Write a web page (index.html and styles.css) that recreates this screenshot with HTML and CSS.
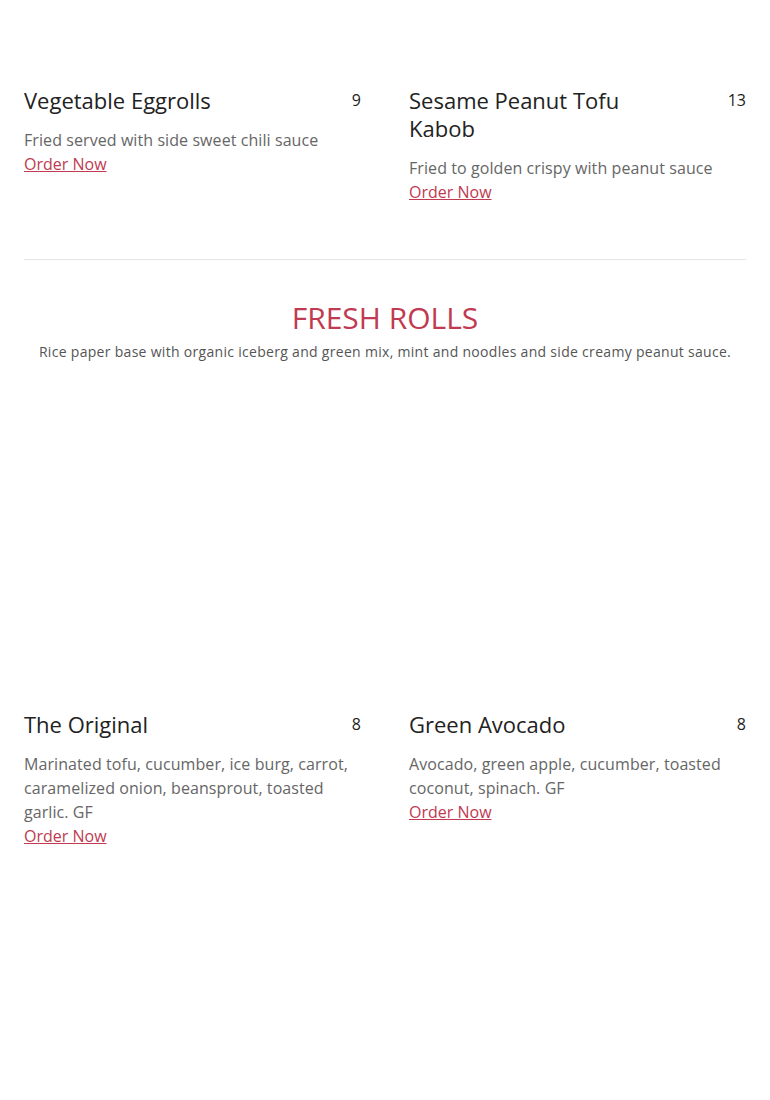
FILE: index.html
```html
<!DOCTYPE html>
<html>
<head>
	<title>Menu</title>
	<link rel="stylesheet" href="styles.css">
</head>
<body>
	<div class="menu">
		<div class="items items-top">
			<div class="item">
				<div class="item-photo"></div>
				<div class="item-head">
					<h3 class="item-name">Vegetable Eggrolls</h3>
					<span class="item-price">9</span>
				</div>
				<p class="item-desc">Fried served with side sweet chili sauce</p>
				<a class="order-link" href="#">Order Now</a>
			</div>
			<div class="item">
				<div class="item-photo"></div>
				<div class="item-head">
					<h3 class="item-name">Sesame Peanut Tofu Kabob</h3>
					<span class="item-price">13</span>
				</div>
				<p class="item-desc">Fried to golden crispy with peanut sauce</p>
				<a class="order-link" href="#">Order Now</a>
			</div>
		</div>

		<div class="section">
			<h2 class="section-title">Fresh Rolls</h2>
			<p class="section-note">Rice paper base with organic iceberg and green mix, mint and noodles and side creamy peanut sauce.</p>
		</div>

		<div class="items">
			<div class="item">
				<div class="item-photo tall"></div>
				<div class="item-head">
					<h3 class="item-name">The Original</h3>
					<span class="item-price">8</span>
				</div>
				<p class="item-desc">Marinated tofu, cucumber, ice burg, carrot, caramelized onion, beansprout, toasted garlic. GF</p>
				<a class="order-link" href="#">Order Now</a>
			</div>
			<div class="item">
				<div class="item-photo tall"></div>
				<div class="item-head">
					<h3 class="item-name">Green Avocado</h3>
					<span class="item-price">8</span>
				</div>
				<p class="item-desc">Avocado, green apple, cucumber, toasted coconut, spinach. GF</p>
				<a class="order-link" href="#">Order Now</a>
			</div>
		</div>
	</div>
</body>
</html>
```

FILE: styles.css
```css
body {
	margin: 0;
	background-color: #fff;
	font-family: "Open Sans", "Liberation Sans", sans-serif;
}
.menu {
	padding: 0 24px 200px;
}
.items {
	display: grid;
	grid-template-columns: 1fr 1fr;
	column-gap: 48px;
	margin-top: 24px;
}
.items-top {
	margin-top: 0;
	padding-bottom: 55px;
	border-bottom: 1px solid #e6e6e6;
}
.item-photo {
	height: 324px;
}
.items-top .item-photo {
	height: 86px;
}
.item-head {
	display: flex;
	justify-content: space-between;
	align-items: flex-start;
}
.item-name {
	margin: 0;
	max-width: 240px;
	font-size: 22px;
	font-weight: 400;
	line-height: 28px;
	color: #222;
}
.item-price {
	margin-top: 1px;
	font-size: 16px;
	line-height: 27px;
	color: #222;
}
.item-desc {
	margin: 14px 0 0;
	font-size: 16px;
	line-height: 24px;
	letter-spacing: 0.08px;
	color: #666;
}
.order-link {
	font-size: 16px;
	line-height: 24px;
	color: #c03a51;
}
.section {
	padding-top: 38px;
	text-align: center;
}
.section-title {
	margin: 0;
	font-size: 30px;
	font-weight: 400;
	line-height: 40px;
	color: #c03a51;
	text-transform: uppercase;
}
.section-note {
	margin: 4px 0 0;
	font-size: 14px;
	line-height: 20px;
	letter-spacing: 0.3px;
	color: #555;
}
```
